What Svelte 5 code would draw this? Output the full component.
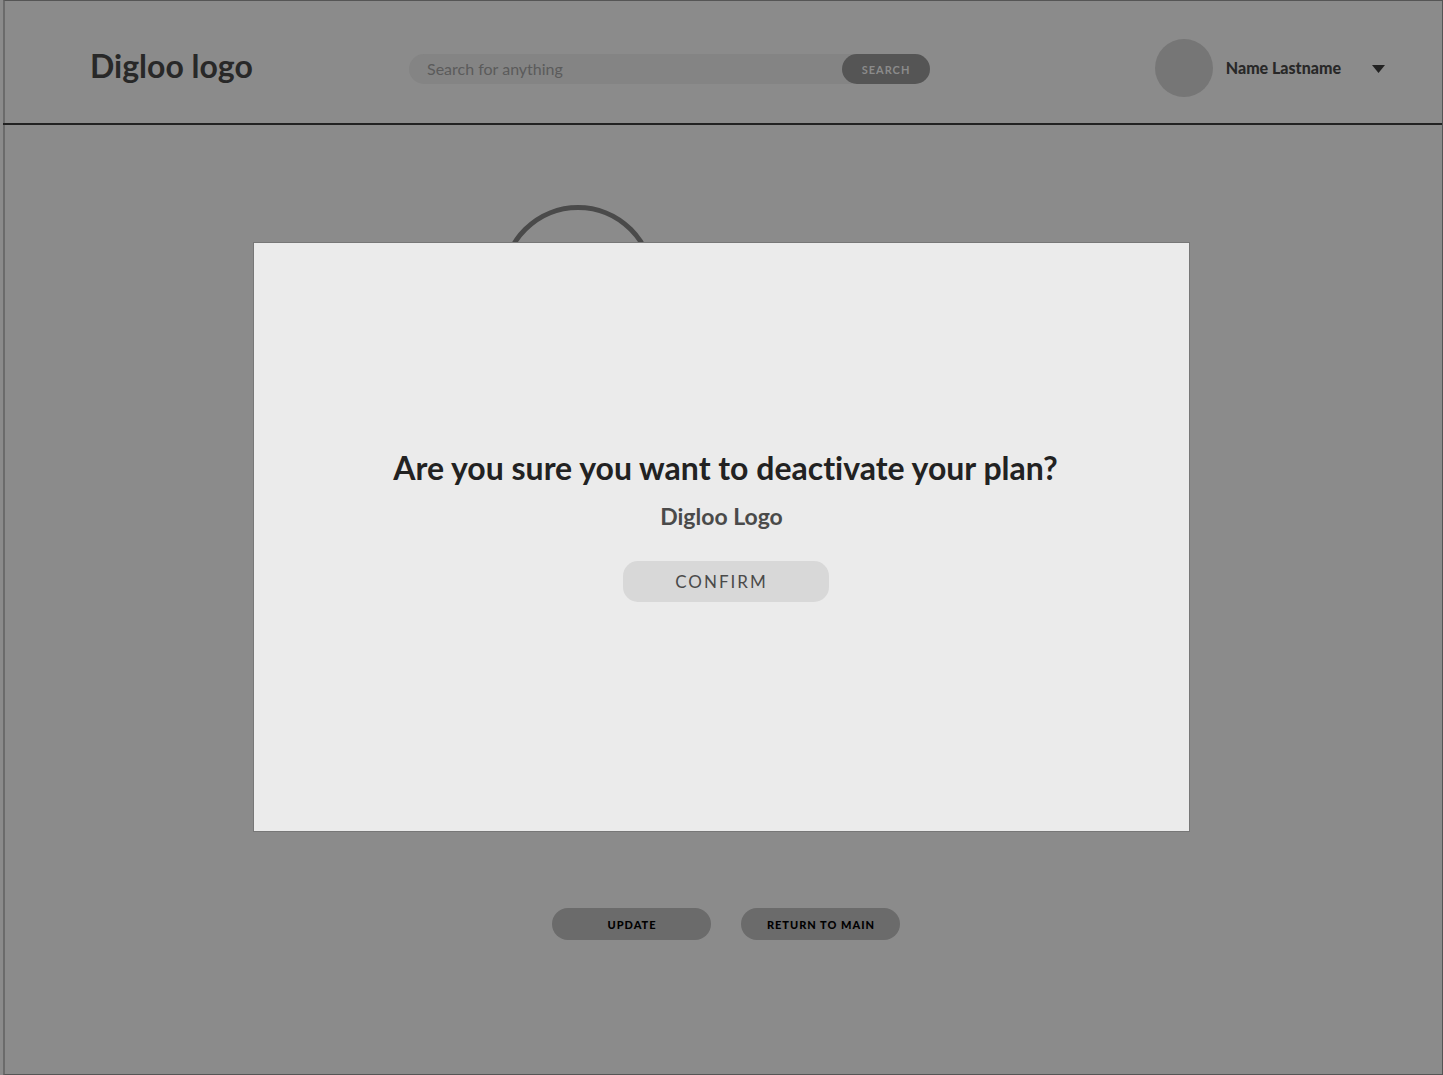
<script>
  let query = $state('');
</script>

<div class="page">
  <header>
    <a class="brand" href="/">Digloo logo</a>
    <form class="search" role="search" onsubmit={(e) => e.preventDefault()}>
      <input type="text" aria-label="Search" placeholder="Search for anything" bind:value={query} />
      <button type="submit">SEARCH</button>
    </form>
    <button class="user" type="button" aria-haspopup="menu">
      <span class="avatar"></span>
      <span class="name">Name Lastname</span>
      <svg class="caret" width="13" height="8" viewBox="0 0 13 8" aria-hidden="true">
        <path d="M0 0H13L6.5 8Z" fill="#222" />
      </svg>
    </button>
  </header>
  <main>
    <svg class="ring" width="154" height="154" viewBox="0 0 154 154" aria-hidden="true">
      <circle cx="77" cy="77" r="74.5" fill="none" stroke="#4a4a4a" stroke-width="5" />
    </svg>
    <div class="actions">
      <button type="button">UPDATE</button>
      <button type="button">RETURN TO MAIN</button>
    </div>
  </main>
</div>

<div class="overlay">
  <div class="dialog" role="dialog" aria-modal="true" aria-labelledby="dialog-title">
    <h1 id="dialog-title">Are you sure you want to deactivate your plan?</h1>
    <p>Digloo Logo</p>
    <button type="button">CONFIRM</button>
  </div>
</div>

<style>
  :global(body) {
    margin: 0;
    background: #8b8b8b;
    font-family: Lato, 'Liberation Sans', sans-serif;
    font-variant-ligatures: none;
  }
  .page {
    box-sizing: border-box;
    display: flex;
    flex-direction: column;
    min-height: 100vh;
    margin-left: 3px;
    border: 1px solid #555;
    border-left: 2px solid #6b6b6b;
  }
  button {
    border: 0;
    padding: 0;
    font-family: inherit;
    cursor: pointer;
  }
  header {
    display: flex;
    align-items: center;
    height: 122px;
    margin-left: -2px;
    padding: 0 57px 0 87px;
    border-bottom: 2px solid #222;
  }
  .brand {
    flex: 0 0 319px;
    padding-top: 8px;
    color: #282828;
    font-size: 32px;
    font-weight: 700;
    line-height: 36px;
    text-decoration: none;
    white-space: nowrap;
  }
  .search {
    display: flex;
    flex: 0 1 521px;
    height: 30px;
    margin: 14px 0 0;
    border-radius: 15px;
    background: #848484;
  }
  .search input {
    flex: 1;
    min-width: 0;
    padding: 0 18px 2px;
    border: 0;
    background: none;
    color: #555;
    font-family: inherit;
    font-size: 16px;
    outline: none;
  }
  .search input::placeholder {
    color: #5b5b5b;
    opacity: 1;
  }
  .search button {
    width: 88px;
    border-radius: 15px;
    background: #555;
    color: #8b8b8b;
    font-size: 11px;
    font-weight: 700;
    letter-spacing: 1px;
  }
  .user {
    display: flex;
    align-items: center;
    margin-left: auto;
    margin-top: 12px;
    background: none;
  }
  .avatar {
    width: 58px;
    height: 58px;
    border-radius: 50%;
    background: #767676;
  }
  .name {
    margin-left: 13px;
    padding-bottom: 2px;
    color: #282828;
    font-size: 16px;
    font-weight: 900;
    white-space: nowrap;
  }
  .caret {
    margin-left: 31px;
    margin-top: 2px;
  }
  main {
    display: flex;
    flex: 1;
    flex-direction: column;
    align-items: center;
    justify-content: space-between;
    padding: 80px 0 134px;
  }
  .ring {
    margin-right: 292px;
  }
  .actions {
    display: flex;
    gap: 30px;
    padding-left: 4px;
  }
  .actions button {
    width: 159px;
    height: 32px;
    padding-left: 2px;
    border-radius: 16px;
    background: #6b6b6b;
    color: #000;
    font-size: 11px;
    font-weight: 900;
    letter-spacing: 1px;
  }
  .overlay {
    position: fixed;
    inset: 0;
    display: flex;
    align-items: center;
    justify-content: center;
    padding-bottom: 2px;
  }
  .dialog {
    box-sizing: border-box;
    display: flex;
    flex-direction: column;
    align-items: center;
    width: 90%;
    max-width: 937px;
    padding: 205px 24px 229px;
    border: 1px solid #777;
    background: #ebebeb;
    text-align: center;
  }
  h1 {
    margin: 0;
    padding-left: 8px;
    color: #222;
    font-size: 32px;
    font-weight: 700;
    line-height: 40px;
  }
  p {
    margin: 14px 0 31px;
    color: #4a4a4a;
    font-size: 23px;
    font-weight: 700;
    line-height: 28px;
  }
  .dialog button {
    width: 206px;
    height: 41px;
    margin-left: 8px;
    padding-right: 8px;
    border-radius: 15px;
    background: #d8d8d8;
    color: #4a4a4a;
    font-size: 17px;
    letter-spacing: 2px;
  }
</style>
